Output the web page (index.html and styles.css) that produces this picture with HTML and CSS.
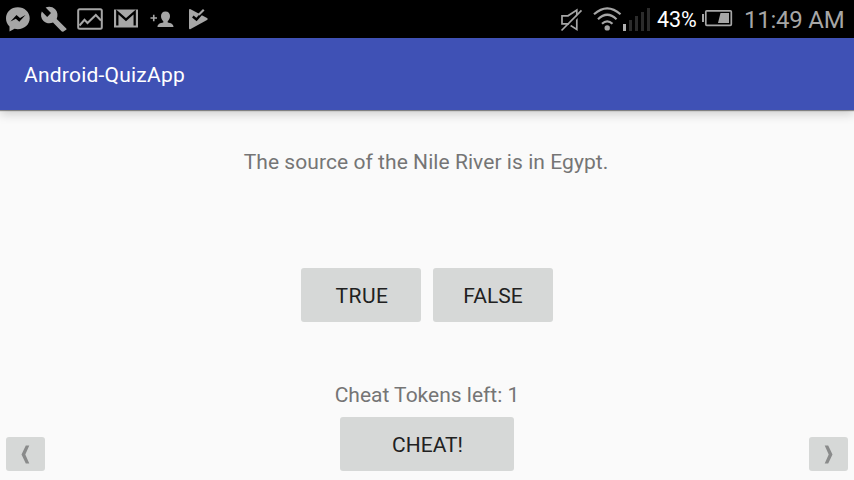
FILE: index.html
```html
<!DOCTYPE html>
<html lang="en">
<head>
<meta charset="utf-8">
<title>Android-QuizApp</title>
<link rel="stylesheet" href="styles.css">
</head>
<body>
<div class="status">
  <svg class="notifications" width="215" height="38" viewBox="0 0 215 38" fill="#a6a6a6">
    <path d="M17.800 7.200C24.500 7.200 29.700 12 29.700 18.300S24.500 29.200 17.800 29.200L14.500 28.700L9.500 31.500V26.400C7.200 24.500 6 21.600 6 18.300C6 12 11.100 7.200 17.800 7.200Z"/>
    <path d="M10.500 21.500L16.500 15L20 17.900L25.500 15L19.300 21.700L15.800 18.700Z" fill="#000"/>
    <path d="M66.300 28.500L56.700 18.900C58.200 15.500 57.600 11.900 55.200 9.300C52.600 6.700 48.800 6.200 45.600 7.600L51 13L47.200 16.900L41.800 11.500C40.300 14.700 41 18.500 43.500 21C46.100 23.500 49.800 24 53 22.600L61.500 31.300Q62.700 32.300 63.800 31.200L66.200 29.800Q67 29.200 66.300 28.500Z"/>
    <rect x="78.200" y="9.200" width="23.600" height="19.600" rx="1.500" fill="none" stroke="#a6a6a6" stroke-width="2"/>
    <path d="M79.500 25.500L84.500 19.800L87.500 23L95.800 15L101 20.500" fill="none" stroke="#a6a6a6" stroke-width="2"/>
    <path d="M114 9.500H138V27.500H114Z"/>
    <path d="M117.300 25.500V12L126 19.700L134.700 12V25.500" fill="none" stroke="#000" stroke-width="2.300"/>
    <path d="M150.500 18H157M153.750 14.700V21.300" stroke="#a6a6a6" stroke-width="1.600"/>
    <path d="M165.500 11.500C168.300 11.500 170 13.300 170 16C170 18.400 169 20.100 167.700 21.200V22.500C170.800 23 173.500 24 173.500 27H157.500C157.500 24 160.200 23 163.300 22.500V21.200C162 20.100 161 18.400 161 16C161 13.300 162.700 11.500 165.500 11.500Z"/>
    <path d="M189 10.300Q189 8.500 190.600 9.200L207 18.100Q208.800 19.100 207 20.100L190.600 29Q189 29.700 189 28Z"/>
    <path d="M192.800 16.500L196.500 19.500L205 9.800" fill="none" stroke="#000" stroke-width="2.400"/>
    <path d="M197.500 14.500L203 9L204.500 10.400L199.500 15.500Z"/>
  </svg>
  <svg class="signals" width="102" height="38" viewBox="555 0 102 38" fill="none" stroke="#a6a6a6">
    <path d="M562 15.800H568L576.800 10V29.500L568 23.800H562Z" stroke-width="1.700"/>
    <path d="M564 31L583 11" stroke="#000" stroke-width="2"/>
    <path d="M561.500 30.500L581.500 10.300" stroke-width="1.700"/>
    <path d="M594 14.300Q607.200 2.500 620.500 14.300M598 19.200Q607.200 10.300 616.500 19.200M602 23.800Q607.200 19 612.500 23.800" stroke-width="2.200"/>
    <circle cx="607.200" cy="27.900" r="2.700" fill="#a6a6a6" stroke="none"/>
    <g stroke="none" fill="#2b2b2b"><path d="M629 20h3v11h-3zM635 16h3v15h-3zM641 12h3v19h-3zM647 8h3v23h-3z"/><path d="M623 24h3v7h-3z" fill="#b0b0b0"/></g>
  </svg>
  <span class="percent">43%</span>
  <svg class="battery" width="32" height="38" viewBox="701 0 32 38" fill="#a6a6a6">
    <path d="M702 14h2v8h-2z"/>
    <rect x="705.800" y="10.800" width="25.500" height="14.500" rx="1" fill="none" stroke="#a6a6a6" stroke-width="1.700"/>
    <path d="M720.500 13H729V23H718Z"/>
  </svg>
  <span class="clock">11:49 AM</span>
</div>
<header class="appbar"><h1 class="title">Android-QuizApp</h1></header>
<main class="quiz">
  <p class="question">The source of the Nile River is in Egypt.</p>
  <div class="answers">
    <button class="btn true">TRUE</button>
    <button class="btn">FALSE</button>
  </div>
  <p class="tokens">Cheat Tokens left: 1</p>
  <div class="bottom">
    <button class="btn nav" aria-label="Previous"><svg width="9" height="19" viewBox="0 0 9 19"><path d="M4.800 .5H8.300L4.300 9.500L8.300 18.500H4.800L.5 9.500Z" fill="#8a8b8b"/></svg></button>
    <button class="btn cheat">CHEAT!</button>
    <button class="btn nav" aria-label="Next"><svg width="9" height="19" viewBox="0 0 9 19"><path d="M4.200 .5H.7L4.700 9.500L.7 18.500H4.200L8.500 9.500Z" fill="#8a8b8b"/></svg></button>
  </div>
</main>
</body>
</html>
```
FILE: styles.css
```css
* { box-sizing: border-box; }
body {
  margin: 0;
  height: 480px;
  overflow: hidden;
  display: flex;
  flex-direction: column;
  background: #fafafa;
  font-family: Roboto, "Liberation Sans", sans-serif;
}
h1, p { margin: 0; font-weight: 400; }
svg { display: block; flex: none; }
.status {
  height: 38px;
  flex: none;
  display: flex;
  background: #000;
  line-height: 39px;
  white-space: nowrap;
}
.signals { margin-left: 340px; }
.percent { width: 44px; color: #fff; font-size: 21.500px; letter-spacing: -.1px; line-height: 40px; }
.clock { margin-left: 11px; color: #a6a6a6; font-size: 24px; letter-spacing: -.25px; line-height: 40px; }
.appbar {
  height: 72px;
  flex: none;
  padding-left: 24px;
  background: #3f51b5;
  color: #fff;
  box-shadow: 0 1px 1px rgba(0, 0, 0, .4), 0 4px 10px rgba(0, 0, 0, .18);
}
.title { font-size: 21px; line-height: 74px; letter-spacing: .22px; }
.quiz {
  flex: 1;
  display: flex;
  flex-direction: column;
  align-items: center;
  color: #757575;
  font-size: 21px;
}
.question { margin: 37px 2px 0 0; line-height: 30px; letter-spacing: .06px; }
.answers { display: flex; gap: 12px; margin-top: 91px; }
.btn {
  width: 120px;
  height: 54px;
  padding: 2px 0 0;
  border: 0;
  border-radius: 3px;
  background: #d6d8d7;
  color: #212121;
  font: inherit;
  display: flex;
  align-items: center;
  justify-content: center;
}
.true { padding-left: 2px; letter-spacing: .5px; }
.tokens { margin-top: 58px; line-height: 30px; }
.bottom {
  align-self: stretch;
  display: flex;
  align-items: flex-end;
  justify-content: space-between;
  margin-top: 7px;
  padding: 0 6px;
}
.cheat { width: 174px; padding-left: 1px; }
.nav { width: 39px; height: 34px; padding: 0; }
```
